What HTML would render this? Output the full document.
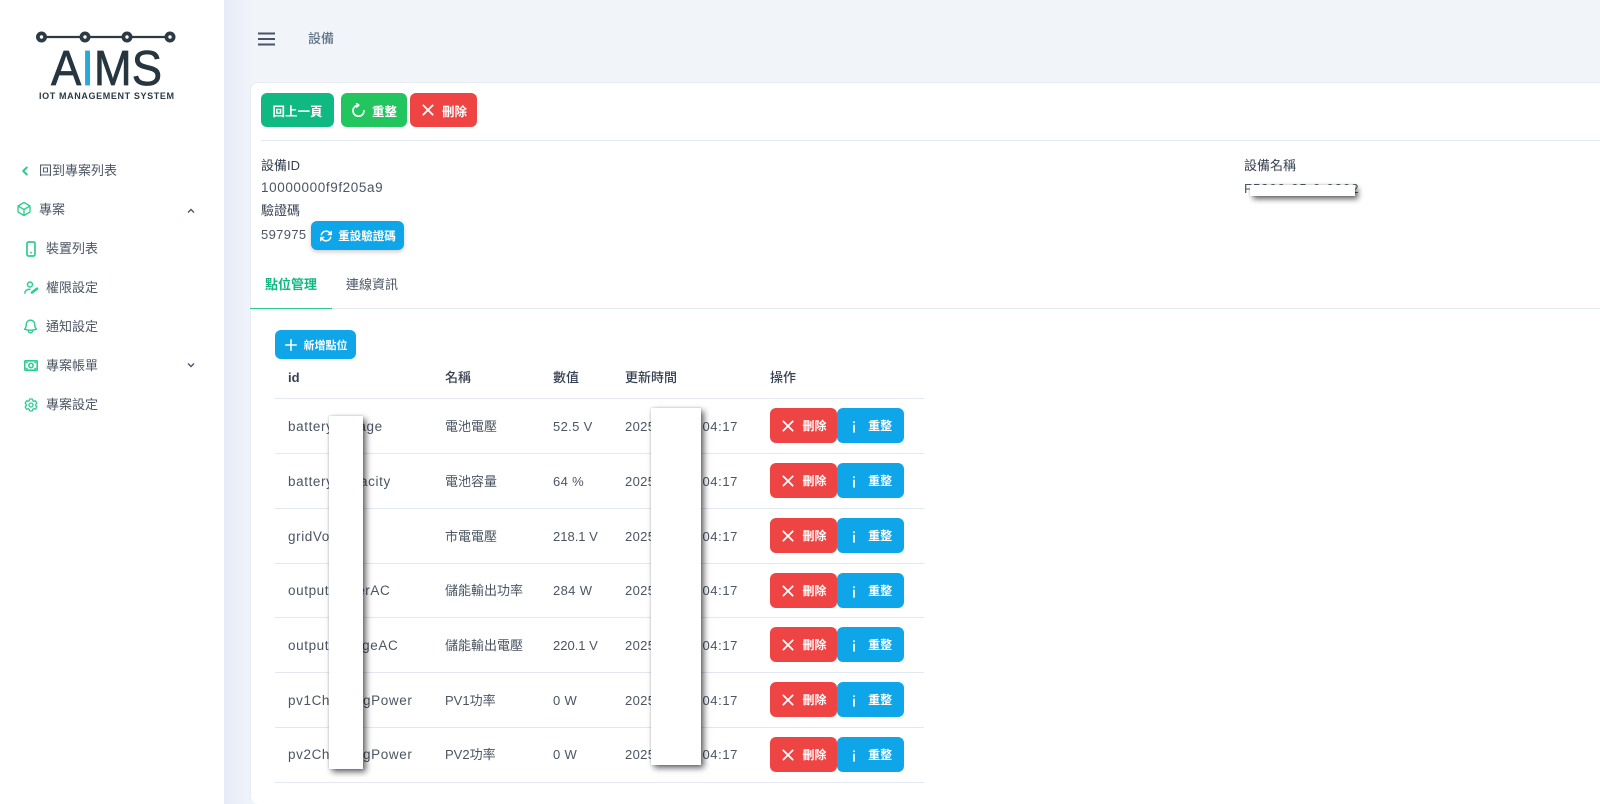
<!DOCTYPE html>
<html lang="zh-Hant"><head><meta charset="utf-8"><title>設備</title>
<style>
*{box-sizing:border-box}
html,body{margin:0;padding:0;width:1600px;height:804px;overflow:hidden;background:#f1f4f9;font-family:"Liberation Sans","Noto Sans CJK TC",sans-serif;font-size:13px;color:#4b5563}
#root{position:absolute;left:0;top:0;width:1600px;height:804px;overflow:hidden}
.a{position:absolute;white-space:nowrap}
.t{line-height:20px;height:20px}
#side{left:0;top:0;width:224px;height:804px;background:#fff}
#fade{left:224px;top:0;width:30px;height:804px;background:linear-gradient(90deg,#e7ebf8,#f1f4f9)}
#card{left:250px;top:82px;width:1350px;height:722px;background:#fff;border-radius:8px 0 0 8px;border:1px solid #e8edf4;border-right:0;border-bottom:0}
.btn{position:absolute;border-radius:6px;color:#fff;font-weight:700;font-size:12.5px;display:flex;align-items:center;justify-content:center;gap:6px}
.sm{font-size:12px;font-weight:700}
.red{background:#ef4444}.blue{background:#0ea5e9}.grn{background:#22c55e}.teal{background:#10b981}
.btn svg{fill:none;stroke:#fff;stroke-width:2.6;stroke-linecap:round;stroke-linejoin:round}
.ic{position:absolute;fill:none;stroke:#2ecc8f;stroke-width:2;stroke-linecap:round;stroke-linejoin:round}
.line{position:absolute;height:1px;background:#e2e8f0}
.mask{position:absolute;background:#fff;box-shadow:3px 3px 6px rgba(0,0,0,.6),0 0 2px rgba(0,0,0,.2)}
.h{font-weight:500;color:#374151}
.b{font-weight:700}
.n{letter-spacing:.6px;font-size:13.5px}
.v{letter-spacing:.35px}
.r{right:862px;letter-spacing:.6px}
</style></head><body><div id="root">
<div class="a" id="side"></div><div class="a" id="fade"></div><div class="a" id="card"></div>

<svg class="a" style="left:35px;top:30px" width="145" height="75" viewBox="0 0 145 75">
<path d="M6 7H135" stroke="#2b3a45" stroke-width="2.2"/>
<g fill="#fff" stroke="#2b3a45" stroke-width="3.8"><circle cx="6.5" cy="7" r="3.6"/><circle cx="50" cy="7" r="3.6"/><circle cx="92" cy="7" r="3.6"/><circle cx="135" cy="7" r="3.6"/></g>
<text x="16" y="55" font-family="Liberation Sans" font-size="49" textLength="111" lengthAdjust="spacingAndGlyphs" fill="#26353f" stroke="#26353f" stroke-width=".7">A<tspan fill="#29a9d6" stroke="#29a9d6">I</tspan>MS</text>
<text x="4" y="69" font-family="Liberation Sans" font-weight="700" font-size="9" textLength="135" lengthAdjust="spacing" fill="#2b3a45">IOT MANAGEMENT SYSTEM</text>
</svg>

<svg class="ic" style="left:20px;top:166px" width="10" height="10" viewBox="0 0 10 10"><path d="M6.8 1.5 3.2 5l3.6 3.5"/></svg>
<div class="a t" style="left:39px;top:161px">回到專案列表</div>
<svg class="ic" style="left:16px;top:201px" width="16" height="16" viewBox="0 0 24 24"><path d="M21 7.5l-9-5.25L3 7.5m18 0l-9 5.25m9-5.25v9l-9 5.25M3 7.5l9 5.25M3 7.5v9l9 5.25m0-9v9"/></svg>
<div class="a t" style="left:39px;top:200px">專案</div>
<svg class="a" style="left:186px;top:207px" width="10" height="8" viewBox="0 0 10 8" fill="none" stroke="#4b5563" stroke-width="1.4"><path d="M2 5.5 5 2.5 8 5.5"/></svg>
<svg class="ic" style="left:24px;top:241px;stroke-width:1.7" width="14" height="16" viewBox="0 0 14 16"><rect x="3" y="1" width="8" height="14" rx="1.5"/><path d="M7 11.5v.3"/></svg>
<div class="a t" style="left:46px;top:239px">裝置列表</div>
<svg class="ic" style="left:24px;top:281px;stroke-width:1.5" width="15" height="14" viewBox="0 0 15 14"><circle cx="6" cy="3.5" r="2.5"/><path d="M.8 12c.5-2.6 2.7-3.7 5.2-3.7"/><path d="M8 11.5l5-3.8" stroke-width="2.6"/></svg>
<div class="a t" style="left:46px;top:278px">權限設定</div>
<svg class="ic" style="left:22px;top:318px" width="17" height="17" viewBox="0 0 24 24"><path d="M14.857 17.082a23.848 23.848 0 005.454-1.31A8.967 8.967 0 0118 9.75v-.7V9A6 6 0 006 9v.75a8.967 8.967 0 01-2.312 6.022c1.733.64 3.56 1.085 5.455 1.31m5.714 0a24.255 24.255 0 01-5.714 0m5.714 0a3 3 0 11-5.714 0"/></svg>
<div class="a t" style="left:46px;top:317px">通知設定</div>
<svg class="ic" style="left:24px;top:360px;stroke-width:1.6" width="14" height="11" viewBox="0 0 14 11"><rect x=".8" y=".8" width="12.4" height="9.4" rx=".6"/><circle cx="7" cy="5.5" r="2.2"/><path d="M2.5 2.5h.5M11 8.5h.5M2.5 8.5h.5M11 2.5h.5"/></svg>
<div class="a t" style="left:46px;top:356px">專案帳單</div>
<svg class="a" style="left:186px;top:361px" width="10" height="8" viewBox="0 0 10 8" fill="none" stroke="#4b5563" stroke-width="1.4"><path d="M2 2.5 5 5.5 8 2.5"/></svg>
<svg class="ic" style="left:22.500px;top:396.500px" width="16" height="16" viewBox="0 0 24 24"><path d="M9.594 3.94c.09-.542.56-.94 1.11-.94h2.593c.55 0 1.02.398 1.11.94l.213 1.281c.063.374.313.686.645.87.074.04.147.083.22.127.324.196.72.257 1.075.124l1.217-.456a1.125 1.125 0 011.37.49l1.296 2.247a1.125 1.125 0 01-.26 1.431l-1.003.827c-.293.24-.438.613-.431.992a6.759 6.759 0 010 .255c-.007.378.138.75.43.99l1.005.828c.424.35.534.954.26 1.43l-1.298 2.247a1.125 1.125 0 01-1.369.491l-1.217-.456c-.355-.133-.75-.072-1.076.124a6.57 6.57 0 01-.22.128c-.331.183-.581.495-.644.869l-.213 1.28c-.09.543-.56.941-1.11.941h-2.594c-.55 0-1.02-.398-1.11-.94l-.213-1.281c-.062-.374-.312-.686-.644-.87a6.52 6.52 0 01-.22-.127c-.325-.196-.72-.257-1.076-.124l-1.217.456a1.125 1.125 0 01-1.369-.49l-1.297-2.247a1.125 1.125 0 01.26-1.431l1.004-.827c.292-.24.437-.613.43-.992a6.932 6.932 0 010-.255c.007-.378-.138-.75-.43-.99l-1.004-.828a1.125 1.125 0 01-.26-1.43l1.297-2.247a1.125 1.125 0 011.37-.491l1.216.456c.356.133.751.072 1.076-.124.072-.044.146-.087.22-.128.332-.183.582-.495.644-.869l.214-1.281z"/><circle cx="12" cy="12" r="3"/></svg>
<div class="a t" style="left:46px;top:395px">專案設定</div>

<svg class="a" style="left:257px;top:31px" width="19" height="16" viewBox="0 0 19 16" stroke="#475569" stroke-width="2"><path d="M1 2.5h17M1 8h17M1 13.5h17"/></svg>
<div class="a t" style="left:308px;top:29px;font-weight:500;color:#64748b">設備</div>

<div class="btn teal" style="left:261px;top:93px;width:73px;height:34px">回上一頁</div>
<div class="btn grn" style="left:341px;top:93px;width:66px;height:34px"><svg width="15" height="15" viewBox="0 0 15 15" style="stroke-width:1.7"><path d="M7.5 2.2A5.5 5.5 0 1 0 13 7.7"/><path d="M5.6 .4 7.8 2.2 5.6 4"/></svg>重整</div>
<div class="btn red" style="left:410px;top:93px;width:67px;height:34px"><svg width="16" height="16" viewBox="0 0 24 24"><path d="M5 19 19 5M5 5l14 14"/></svg>刪除</div>
<div class="line" style="left:261px;top:140px;width:1339px"></div>

<div class="a t" style="left:261px;top:156px;color:#374151">設備ID</div>
<div class="a t n" style="left:261px;top:178px">10000000f9f205a9</div>
<div class="a t" style="left:261px;top:201px;color:#374151">驗證碼</div>
<div class="a t v" style="left:261px;top:225px">597975</div>
<div class="btn blue sm" style="left:311px;top:221px;width:93px;height:29px;font-size:11.5px;gap:5px;box-shadow:0 2px 4px rgba(0,0,0,.2)"><svg width="14" height="14" viewBox="0 0 24 24"><path d="M16.023 9.348h4.992M2.985 19.644v-4.992m0 0h4.992m-4.993 0l3.181 3.183a8.25 8.25 0 0013.803-3.7M4.031 9.865a8.25 8.25 0 0113.803-3.7l3.181 3.182m0-4.991v4.99"/></svg>重設驗證碼</div>

<div class="a t" style="left:1244px;top:156px;color:#374151">設備名稱</div>
<div class="a t" style="left:1244px;top:179px;letter-spacing:1px">F5300-05-0-0302</div>
<div class="mask" style="left:1250px;top:185px;width:105px;height:11px"></div>

<div class="a t" style="left:265px;top:275px;color:#10b981;font-weight:700">點位管理</div>
<div class="a t" style="left:346px;top:275px">連線資訊</div>
<div class="line" style="left:250px;top:308px;width:1350px"></div>
<div class="a" style="left:250px;top:308px;width:82px;height:1px;background:#2ecc8f"></div>

<div class="btn blue sm" style="left:275px;top:330px;width:81px;height:29px;font-size:11px"><svg width="14" height="14" viewBox="0 0 24 24"><path d="M12 3v18M3 12h18"/></svg>新增點位</div>

<div class="a t b" style="left:288px;top:368px;color:#374151">id</div>
<div class="a t h" style="left:445px;top:368px">名稱</div>
<div class="a t h" style="left:553px;top:368px">數值</div>
<div class="a t h" style="left:625px;top:368px">更新時間</div>
<div class="a t h" style="left:770px;top:368px">操作</div>
<div class="line" style="left:275px;top:398px;width:649px"></div>

<div class="a t n" style="left:288px;top:417px">batteryVoltage</div><div class="a t" style="left:445px;top:417px">電池電壓</div><div class="a t v" style="left:553px;top:417px">52.5 V</div><div class="a t v" style="left:625px;top:417px">2025</div><div class="a t r" style="top:417px">1:04:17</div>
<div class="btn red sm" style="left:770px;top:408px;width:67px;height:35px"><svg width="16" height="16" viewBox="0 0 24 24"><path d="M5 19 19 5M5 5l14 14"/></svg>刪除</div><div class="btn blue sm" style="left:837px;top:408px;width:67px;height:35px"><svg width="10" height="16" viewBox="0 0 10 24"><path d="M5 6v.5M5 11v10"/></svg>&nbsp;重整</div><div class="line" style="left:275px;top:453px;width:649px"></div>

<div class="a t n" style="left:288px;top:472px">batteryCapacity</div><div class="a t" style="left:445px;top:472px">電池容量</div><div class="a t v" style="left:553px;top:472px">64 %</div><div class="a t v" style="left:625px;top:472px">2025</div><div class="a t r" style="top:472px">1:04:17</div>
<div class="btn red sm" style="left:770px;top:463px;width:67px;height:35px"><svg width="16" height="16" viewBox="0 0 24 24"><path d="M5 19 19 5M5 5l14 14"/></svg>刪除</div><div class="btn blue sm" style="left:837px;top:463px;width:67px;height:35px"><svg width="10" height="16" viewBox="0 0 10 24"><path d="M5 6v.5M5 11v10"/></svg>&nbsp;重整</div><div class="line" style="left:275px;top:508px;width:649px"></div>

<div class="a t n" style="left:288px;top:527px">gridVoltage</div><div class="a t" style="left:445px;top:527px">市電電壓</div><div class="a t" style="left:553px;top:527px">218.1 V</div><div class="a t v" style="left:625px;top:527px">2025</div><div class="a t r" style="top:527px">1:04:17</div>
<div class="btn red sm" style="left:770px;top:518px;width:67px;height:35px"><svg width="16" height="16" viewBox="0 0 24 24"><path d="M5 19 19 5M5 5l14 14"/></svg>刪除</div><div class="btn blue sm" style="left:837px;top:518px;width:67px;height:35px"><svg width="10" height="16" viewBox="0 0 10 24"><path d="M5 6v.5M5 11v10"/></svg>&nbsp;重整</div><div class="line" style="left:275px;top:563px;width:649px"></div>

<div class="a t n" style="left:288px;top:581px">outputPowerAC</div><div class="a t" style="left:445px;top:581px">儲能輸出功率</div><div class="a t v" style="left:553px;top:581px">284 W</div><div class="a t v" style="left:625px;top:581px">2025</div><div class="a t r" style="top:581px">1:04:17</div>
<div class="btn red sm" style="left:770px;top:573px;width:67px;height:35px"><svg width="16" height="16" viewBox="0 0 24 24"><path d="M5 19 19 5M5 5l14 14"/></svg>刪除</div><div class="btn blue sm" style="left:837px;top:573px;width:67px;height:35px"><svg width="10" height="16" viewBox="0 0 10 24"><path d="M5 6v.5M5 11v10"/></svg>&nbsp;重整</div><div class="line" style="left:275px;top:617px;width:649px"></div>

<div class="a t n" style="left:288px;top:636px">outputVoltageAC</div><div class="a t" style="left:445px;top:636px">儲能輸出電壓</div><div class="a t" style="left:553px;top:636px">220.1 V</div><div class="a t v" style="left:625px;top:636px">2025</div><div class="a t r" style="top:636px">1:04:17</div>
<div class="btn red sm" style="left:770px;top:627px;width:67px;height:35px"><svg width="16" height="16" viewBox="0 0 24 24"><path d="M5 19 19 5M5 5l14 14"/></svg>刪除</div><div class="btn blue sm" style="left:837px;top:627px;width:67px;height:35px"><svg width="10" height="16" viewBox="0 0 10 24"><path d="M5 6v.5M5 11v10"/></svg>&nbsp;重整</div><div class="line" style="left:275px;top:672px;width:649px"></div>

<div class="a t n" style="left:288px;top:691px">pv1ChargingPower</div><div class="a t" style="left:445px;top:691px">PV1功率</div><div class="a t v" style="left:553px;top:691px">0 W</div><div class="a t v" style="left:625px;top:691px">2025</div><div class="a t r" style="top:691px">1:04:17</div>
<div class="btn red sm" style="left:770px;top:682px;width:67px;height:35px"><svg width="16" height="16" viewBox="0 0 24 24"><path d="M5 19 19 5M5 5l14 14"/></svg>刪除</div><div class="btn blue sm" style="left:837px;top:682px;width:67px;height:35px"><svg width="10" height="16" viewBox="0 0 10 24"><path d="M5 6v.5M5 11v10"/></svg>&nbsp;重整</div><div class="line" style="left:275px;top:727px;width:649px"></div>

<div class="a t n" style="left:288px;top:745px">pv2ChargingPower</div><div class="a t" style="left:445px;top:745px">PV2功率</div><div class="a t v" style="left:553px;top:745px">0 W</div><div class="a t v" style="left:625px;top:745px">2025</div><div class="a t r" style="top:745px">1:04:17</div>
<div class="btn red sm" style="left:770px;top:737px;width:67px;height:35px"><svg width="16" height="16" viewBox="0 0 24 24"><path d="M5 19 19 5M5 5l14 14"/></svg>刪除</div><div class="btn blue sm" style="left:837px;top:737px;width:67px;height:35px"><svg width="10" height="16" viewBox="0 0 10 24"><path d="M5 6v.5M5 11v10"/></svg>&nbsp;重整</div><div class="line" style="left:275px;top:782px;width:649px"></div>

<div class="mask" style="left:329px;top:416px;width:34px;height:353px"></div>
<div class="mask" style="left:651px;top:408px;width:50px;height:357px"></div>
</div></body></html>
